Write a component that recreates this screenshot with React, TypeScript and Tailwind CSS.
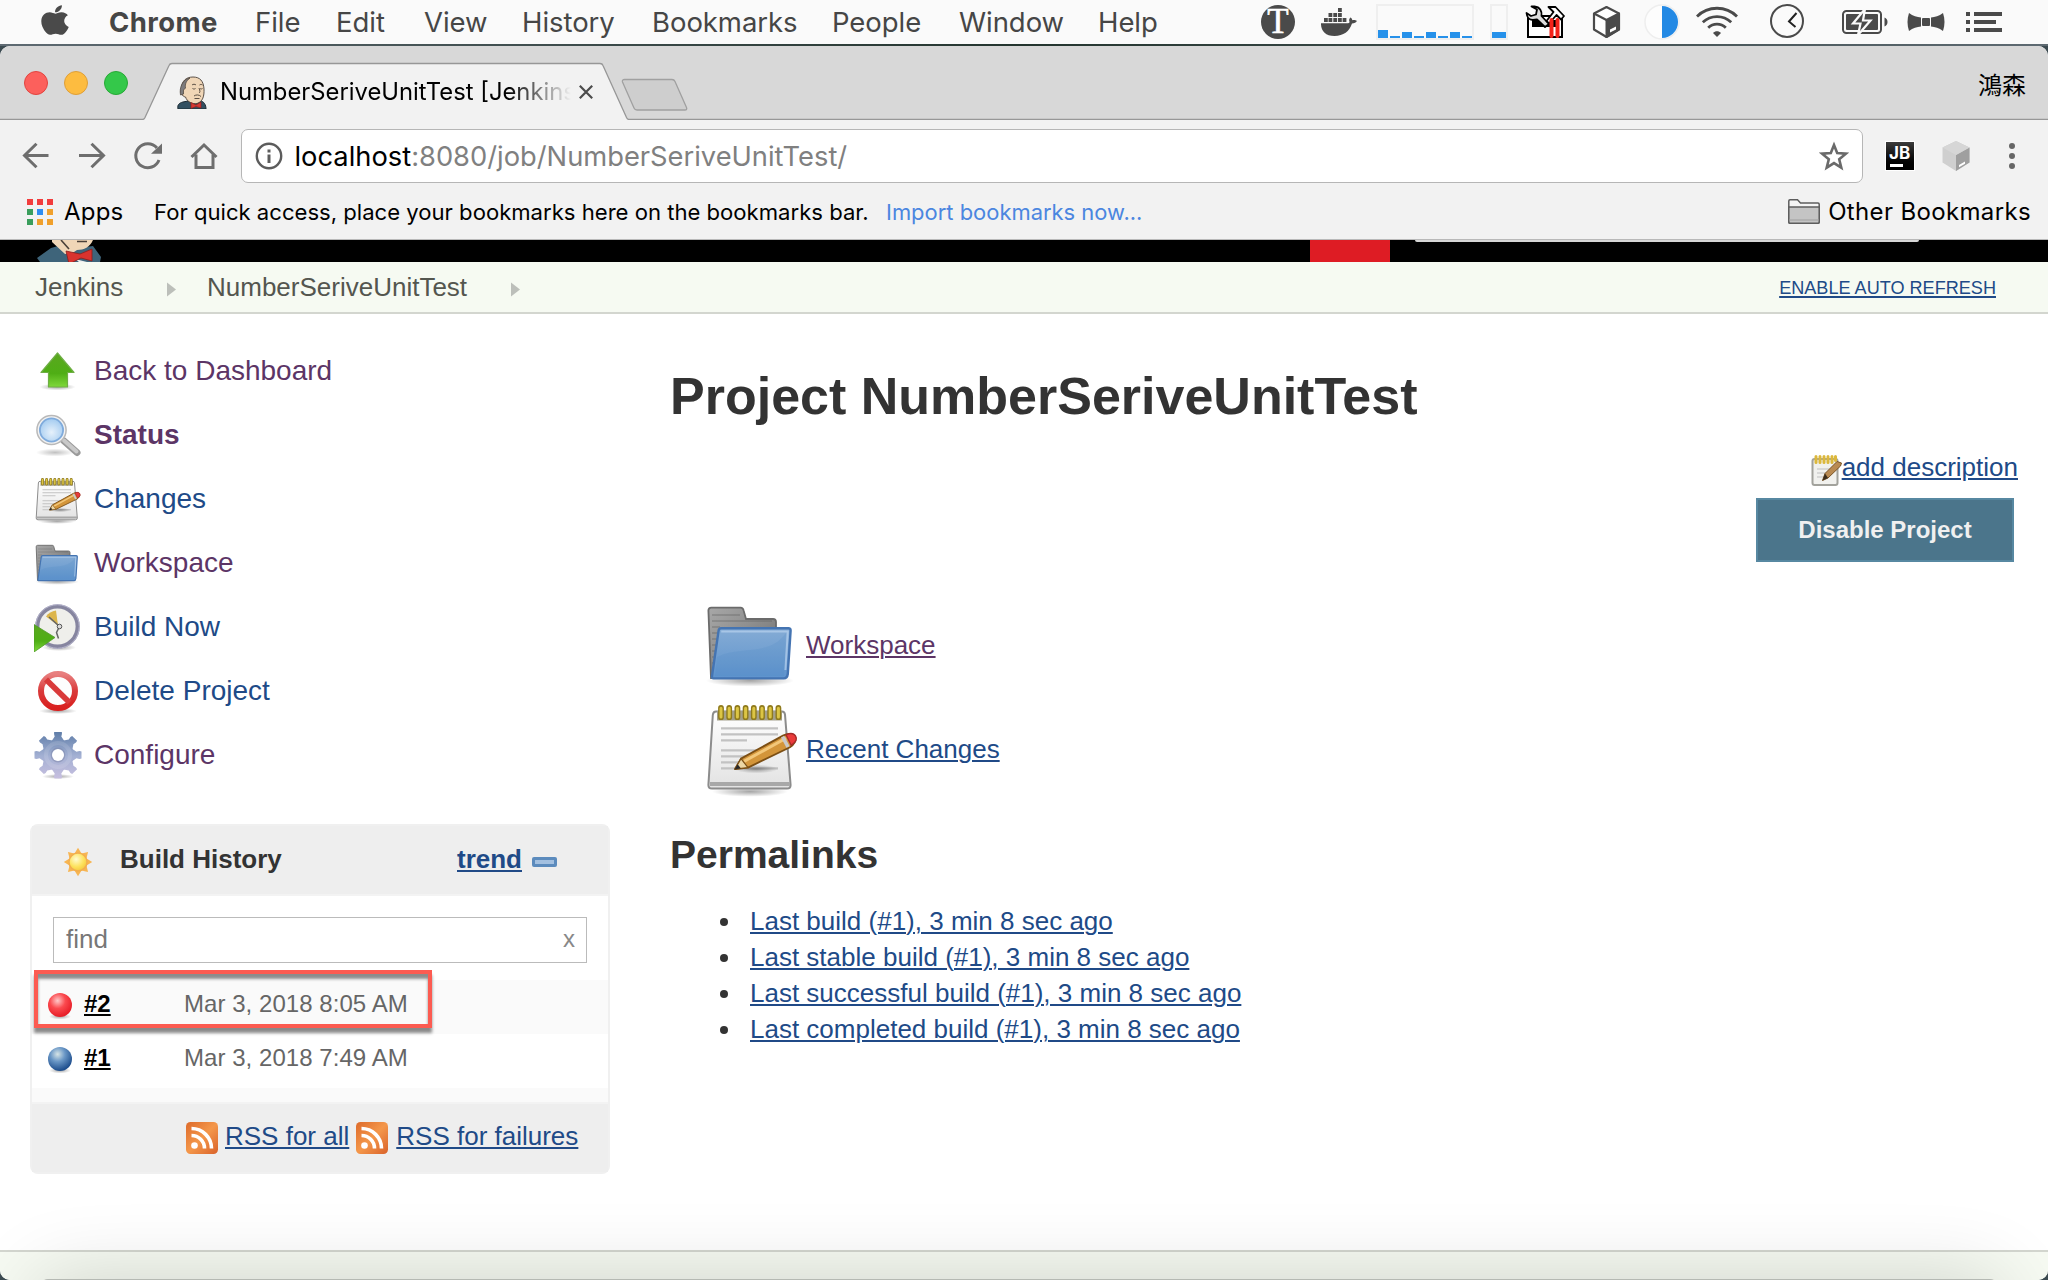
import React from "react";
import { FaApple } from "react-icons/fa";

const LINK = "underline decoration-2 underline-offset-[2px] whitespace-nowrap";

/* ---------- menu bar ---------- */

const MENUS: [string, string][] = [
  ["File", "w-[81px]"],
  ["Edit", "w-[88px]"],
  ["View", "w-[98px]"],
  ["History", "w-[130px]"],
  ["Bookmarks", "w-[180px]"],
  ["People", "w-[127px]"],
  ["Window", "w-[139px]"],
  ["Help", "w-[70px]"],
];

function DockerIcon() {
  const boxes = [
    [17, 8], [7.5, 13], [12.3, 13], [17, 13],
    [3, 18], [7.5, 18], [12.3, 18], [17, 18], [21.6, 18],
  ];
  return (
    <svg className="ml-[26px] h-[44px] w-[36px]" viewBox="0 0 36 44" fill="#4a4a4a">
      {boxes.map(([x, y]) => (
        <rect key={`${x}-${y}`} x={x} y={y} width="3.8" height="4" />
      ))}
      <path d="M0 23.3h26c1.600 0 2.500-.5 2.600-1.300-.9-1.600-.4-3.600 1-4.600 1 .8 1.600 1.700 1.700 2.800 1.700-.3 3.600 0 4.600.9-.8 1.600-2.600 2.500-4.900 2.500C28.500 31.500 22.500 36 13.500 36 4.500 36-.2 31 0 23.300z" />
    </svg>
  );
}

function ToolboxIcon() {
  return (
    <svg className="ml-[17px] h-[44px] w-[40px]" viewBox="0 0 40 44">
      <path d="M3 16h34v21H3z" fill="#fff" stroke="#000" strokeWidth="2" />
      <path d="M7 20h26v7H7z" fill="#000" />
      <path d="M6.500 6.500 12 9.500l-1 5-5 1.500-4.500-3c.5 4.500 3 7 6.500 7l4-.5 8 7.500 4-3-7.500-8c.8-4.500-1.500-9-7-9.500z" fill="#ddd" stroke="#000" strokeWidth="1.800" strokeLinejoin="round" />
      <path d="M23.500 7h7l8.500 9-3 3.500-4.500-4.500-7.500 8.500-2.500-2.500 7-9z" fill="#fff" stroke="#000" strokeWidth="1.800" strokeLinejoin="round" />
      <path d="M26.500 20v16M32.500 20v16" stroke="#f4231b" strokeWidth="4" strokeLinecap="round" />
    </svg>
  );
}

function MenuBar() {
  return (
    <div className="flex h-11 shrink-0 items-center bg-[#fafafa] font-[Inter] text-[27.5px] leading-[44px] text-[#464646]">
      <div className="flex w-[109px] shrink-0 items-center pl-[41px]">
        <FaApple className="h-[34px] w-[28px] -translate-y-[2px] text-[#4a4a4a]" preserveAspectRatio="none" />
      </div>
      <span className="w-[146px] font-bold tracking-[0.4px]">Chrome</span>
      {MENUS.map(([m, w]) => (
        <span key={m} className={`${w} whitespace-nowrap tracking-[-0.05px]`}>{m}</span>
      ))}
      <div className="ml-[93px] flex size-[34px] items-center justify-center rounded-full bg-[#4a4a4a]">
        <span className="font-['Liberation_Serif'] text-[35px] leading-[34px] text-white [-webkit-text-stroke:0.6px_white]">T</span>
      </div>
      <DockerIcon />
      <div className="ml-[19px] flex h-[36px] w-[98px] items-end gap-[2px] border-2 border-[#efefef] pb-0">
        {[8, 2, 6, 2, 6, 2, 6, 2].map((h, i) => (
          <span key={i} className="w-[10px] bg-[#2691ea]" style={{ height: h }} />
        ))}
      </div>
      <div className="ml-4 flex h-[36px] w-[18px] items-end border-2 border-[#efefef]">
        <span className="h-[6px] w-full bg-[#2691ea]" />
      </div>
      <ToolboxIcon />
      <svg className="ml-[27px] h-[44px] w-[30px]" viewBox="0 0 30 44">
        <path d="M14.500 7 27 13.500v16L14.500 37 2 29.500v-16z" fill="#fff" stroke="#4a4a4a" strokeWidth="2.200" strokeLinejoin="round" />
        <path d="M14.500 20 27 13.500v16L14.500 37z" fill="#4a4a4a" stroke="#4a4a4a" strokeWidth="2" strokeLinejoin="round" />
        <path d="M2 13.500 14.500 20" stroke="#4a4a4a" strokeWidth="2.200" />
        <path d="m18 29.500 6-3v3l-6 3z" fill="#fff" />
      </svg>
      <svg className="ml-[22px] h-[44px] w-[36px]" viewBox="0 0 36 44">
        <circle cx="18" cy="22" r="17" fill="#fdfdfd" stroke="#eeeeee" strokeWidth="1.500" />
        <path d="M18 6a16 16 0 0 1 0 32z" fill="#2389e4" />
      </svg>
      <svg className="ml-[16px] h-[44px] w-[42px]" viewBox="0 0 42 44" fill="none" stroke="#4a4a4a" strokeWidth="2.800">
        <path d="M1 16.500C12 5.500 30 5.500 41 16.500" />
        <path d="M6.800 22.300c8-7.600 20.400-7.600 28.400 0" />
        <path d="M12.200 27.800c5-4.800 12.600-4.800 17.600 0" />
        <path d="M17 33c2.200-2.200 5.800-2.200 8 0l-4 4z" fill="#4a4a4a" stroke="none" />
      </svg>
      <svg className="ml-[32px] h-[44px] w-[34px]" viewBox="0 0 34 44" fill="none">
        <circle cx="17" cy="21" r="16" stroke="#4a4a4a" strokeWidth="2" />
        <path d="m26.500 13-7.500 8.500 6.500 5.500" stroke="#222" strokeWidth="2" />
      </svg>
      <svg className="ml-[38px] h-[44px] w-[46px]" viewBox="0 0 46 44">
        <rect x="1" y="11" width="38" height="22" rx="3.500" fill="none" stroke="#4a4a4a" strokeWidth="2" />
        <rect x="4" y="14" width="32" height="16" rx="1" fill="#4a4a4a" />
        <path d="M42.500 17.500c4 1 4 8 0 9z" fill="#4a4a4a" />
        <path d="M23 9 11 23.500h7.500L16 35l12.500-14.500h-7.500z" fill="#4a4a4a" stroke="#fafafa" strokeWidth="2.200" />
      </svg>
      <svg className="ml-[19px] h-[44px] w-[38px]" viewBox="0 0 38 44" fill="#4a4a4a">
        <path d="M2 13c4 3 8 4 12 4.500v9C10 27 6 28 2 31c-2-6-2-12 0-18zM36 13c-4 3-8 4-12 4.500v9C28 27 32 28 36 31c2-6 2-12 0-18z" />
        <rect x="15" y="18" width="8" height="8" rx="1" />
      </svg>
      <svg className="ml-[21px] h-[44px] w-[36px]" viewBox="0 0 36 44" fill="#4a4a4a">
        <path d="M0 12h4v4H0zM8 12h28v4H8zM0 20h4v4H0zM8 20h22v4H8zM0 28h4v4H0zM8 28h28v4H8z" />
      </svg>
    </div>
  );
}

/* ---------- browser chrome ---------- */

function ButlerFace({ className }: { className: string }) {
  return (
    <svg className={className} viewBox="0 0 30 33">
      <path d="M1 33c-1-4 1-6 5-7l5-1h12c4 0 6 4 6 8z" fill="#335061" stroke="#1d2a33" />
      <path d="M4.500 13C4.500 5 9 1 16 1c7 0 10.500 4 11 12 .3 7-1 12.500-7 14.500-5 1-10-2-11.500-6.500C5 20.500 3 16 4.500 13z" fill="#f0d6b7" stroke="#4a4038" strokeWidth=".9" />
      <path d="M3.500 19C2 11 6 3 13 2 9 5 8 8 8.500 12L6.500 14v4z" fill="#7d7b7d" stroke="#4a4038" strokeWidth=".7" />
      <path d="M15 9c1-1 3-1 4 0M22.500 9c1-.7 2-.7 3 0M15.500 12.500c1 .7 2 .7 3 0M23 12.500c.8.600 1.700.600 2.500 0M22 12c1 3 1.500 4 0 5M17 20c2-1.500 5-1.500 7 .5M17.500 22.500h5" fill="none" stroke="#4a4038" strokeWidth=".9" />
      <path d="M14 26.500 19 29l5-3v6l-5-1.500-5 2z" fill="#d33833" stroke="#8e1d1a" strokeWidth=".6" />
    </svg>
  );
}

function TabStrip() {
  return (
    <div className="relative flex h-[74px] shrink-0 items-stretch bg-[#d8d8d8]">
      {/* Strip baseline and the outlines of the active tab and the new-tab button. */}
      <svg className="absolute inset-0 h-[74px] w-full" fill="none">
        <path d="M0 73.500h142.500c1.500 0 2-1 2.500-2L169 19.500c.6-1.500 1.500-2 3-2h428c1.500 0 2.500.5 3 2l23.500 52c.5 1 1 2 2.500 2H2048V74H0z" fill="#f2f2f2" />
        <path d="M0 73.500h142.500c1.500 0 2-1 2.500-2L169 19.500c.6-1.500 1.500-2 3-2h428c1.500 0 2.500.5 3 2l23.500 52c.5 1 1 2 2.500 2H2048" stroke="#979797" strokeWidth="1.300" />
        <path d="M624.500 33.500H672c1.500 0 2.500.8 3 2l11.500 26c.6 1.500 0 2.500-1.500 2.500h-48c-1.500 0-2.500-.8-3-2l-11.500-26c-.6-1.500.5-2.500 2-2.500z" fill="#cecece" stroke="#a0a0a0" strokeWidth="1.300" />
      </svg>
      <div className="relative flex flex-1 items-center">
        <div className="mt-[2px] flex w-[177px] items-center gap-4 pb-[2px] pl-6">
          <span className="size-6 rounded-full border border-[#e2443f] bg-[#fc605c]" />
          <span className="size-6 rounded-full border border-[#df9f38] bg-[#fdbc40]" />
          <span className="size-6 rounded-full border border-[#27a936] bg-[#34c84a]" />
        </div>
        <ButlerFace className="mt-[18px] h-[33px] w-[30px]" />
        <span className="mt-[17px] ml-[13px] w-[351px] overflow-hidden mask-r-from-82% mask-r-to-100% font-[Inter] text-[23.800px] leading-[32px] whitespace-nowrap text-black">
          NumberSeriveUnitTest [Jenkins]
        </span>
        <svg className="mt-[18px] ml-[8px] size-[14px]" viewBox="0 0 14 14" stroke="#4c4c4c" strokeWidth="2.200">
          <path d="M.8.800l12.400 12.400M13.200.800.800 13.200" />
        </svg>
        <span className="mt-[2px] mr-[22px] ml-auto font-['Noto_Sans_CJK_TC',sans-serif] text-[24px] leading-[32px] text-black">鴻森</span>
      </div>
    </div>
  );
}

function Toolbar() {
  return (
    <div className="flex h-[72px] shrink-0 items-center bg-[#f2f2f2]">
      <svg className="h-[72px] w-[241px]" viewBox="0 0 241 72" fill="none" stroke="#6e6e6e" strokeWidth="3">
        <path d="M48.500 35.500H25M36.500 23.700 24.500 35.500l12 11.800" />
        <path d="M79 35.500h23.500M91.500 23.700l12 11.800-12 11.800" />
        <path d="M159 40A12 12 0 1 1 157 28" />
        <path d="M162 23.500v10.300H151z" fill="#6e6e6e" stroke="none" />
        <path d="m191.500 37 12.500-12 12.500 12M196 34.500v13h17v-13" />
      </svg>
      <div className="flex h-[54px] w-[1622px] items-center rounded-[7px] border border-[#b6b6b6] bg-white pl-[13px]">
        <svg className="size-[28px]" viewBox="0 0 28 28" fill="none" stroke="#5c5c5c">
          <circle cx="14" cy="14" r="12.200" strokeWidth="2.400" />
          <path d="M14 12.500v8.500M14 7.500v3" strokeWidth="3" />
        </svg>
        <span className="mt-[2px] ml-[11.500px] font-[Inter] text-[27.300px] leading-[40px] whitespace-nowrap text-[#808080]">
          <span className="text-black">localhost</span>:8080/job/NumberSeriveUnitTest/
        </span>
        <svg className="mr-[13px] ml-auto size-[30px]" viewBox="0 0 30 30" fill="none" stroke="#6a6a6a" strokeWidth="2.600">
          <path d="m15 4 3.200 8.100 8.700.6-6.700 5.600 2.100 8.400L15 22.100l-7.300 4.600 2.100-8.400-6.700-5.600 8.700-.6z" />
        </svg>
      </div>
      <div className="ml-[22px] flex size-[30px] flex-col border border-white bg-linear-to-b from-[#3c3c3c] to-black">
        <span className="h-[22px] pl-[3px] font-[Inter] text-[17px] leading-[22px] font-bold text-white">JB</span>
        <span className="ml-1 h-[2.500px] w-[13px] bg-white" />
      </div>
      <svg className="ml-[27px] size-[30px]" viewBox="0 0 30 30">
        <path d="m14 0 13.500 6.500v15L14 30 .5 21.500v-15z" fill="#cfcfcf" />
        <path d="M14 14 27.500 6.500v15L14 30z" fill="#9f9f9f" />
        <path d="m14 0 13.500 6.500L14 14 .5 6.500z" fill="#d6d6d6" />
        <path d="m17 24 6-3.500v2.300l-6 3.400z" fill="#fff" />
      </svg>
      <div className="ml-[37px] flex flex-col gap-1">
        <span className="size-[6px] rounded-full bg-[#666]" />
        <span className="size-[6px] rounded-full bg-[#666]" />
        <span className="size-[6px] rounded-full bg-[#666]" />
      </div>
    </div>
  );
}

const APP_DOTS = [
  "bg-[#f23d3d]", "bg-[#f23d3d]", "bg-[#f23d3d]",
  "bg-[#3a9e5c]", "bg-[#2e8df2]", "bg-[#f0a02c]",
  "bg-[#3a9e5c]", "bg-[#f0a02c]", "bg-[#f0a02c]",
];

function BookmarksBar() {
  return (
    <div className="flex h-12 shrink-0 items-center border-b border-[#b9b9b9] bg-[#f2f2f2] pb-[10px] pl-[27px] font-[Inter] whitespace-nowrap text-black">
      <div className="mt-[2px] grid grid-cols-3 gap-1">
        {APP_DOTS.map((c, i) => (
          <span key={i} className={`size-[6px] ${c}`} />
        ))}
      </div>
      <span className="mt-[3px] ml-[11px] w-[90px] text-[24px] leading-[32px] tracking-[0.2px]">Apps</span>
      <span className="mt-[2px] w-[732px] text-[22.100px] leading-[32px]">
        For quick access, place your bookmarks here on the bookmarks bar.
      </span>
      <span className="mt-[2px] text-[21.950px] leading-[32px] text-[#4b86e0]">Import bookmarks now...</span>
      <svg className="mt-[2px] ml-auto h-[25px] w-[32px]" viewBox="0 0 32 25" stroke="#5d5d5d" strokeWidth="1.500">
        <path d="M.8 23V2Q.8.800 2 .8h7.500L12.500 4H30q1.200 0 1.200 1.200V23q0 1.200-1.200 1.200H2Q.8 24.200.8 23z" fill="#f4f4f4" />
        <path d="M.8 8h30.400v15q0 1.200-1.200 1.200H2Q.8 24.200.8 23z" fill="#c4c4c4" />
        <path d="M1.600 21h28.800" stroke="#ababab" />
      </svg>
      <span className="mt-[2px] mr-[17px] ml-2 text-[24px] leading-[32px] tracking-[0.350px]">Other Bookmarks</span>
    </div>
  );
}

/* ---------- page icons ---------- */

function Defs() {
  return (
    <svg className="absolute size-0">
      <defs>
        <linearGradient id="green" x1="0" y1="0" x2="0" y2="1"><stop offset="0" stopColor="#5aa71f" /><stop offset=".6" stopColor="#4fae15" /><stop offset="1" stopColor="#7fd83a" /></linearGradient>
        <linearGradient id="blue" x1="0" y1="0" x2="0" y2="1"><stop offset="0" stopColor="#85acd5" /><stop offset="1" stopColor="#5e93cd" /></linearGradient>
        <linearGradient id="grey" x1="0" y1="0" x2="1" y2="1"><stop offset="0" stopColor="#a8a8a8" /><stop offset="1" stopColor="#6c6c6c" /></linearGradient>
        <linearGradient id="paper" x1="0" y1="0" x2="0" y2="1"><stop offset="0" stopColor="#ffffff" /><stop offset="1" stopColor="#e2e2e2" /></linearGradient>
        <linearGradient id="redband" x1="0" y1="0" x2="0" y2="1"><stop offset="0" stopColor="#e87f7f" /><stop offset=".5" stopColor="#d93a3a" /><stop offset="1" stopColor="#d9201f" /></linearGradient>
        <linearGradient id="gear" x1="0" y1="0" x2="0" y2="1"><stop offset="0" stopColor="#5f7da8" /><stop offset=".5" stopColor="#a3b0d3" /><stop offset="1" stopColor="#c9c0e0" /></linearGradient>
        <linearGradient id="rss" x1="0" y1="0" x2="1" y2="1"><stop offset="0" stopColor="#dd6a2b" /><stop offset=".5" stopColor="#f4974a" /><stop offset="1" stopColor="#d9622a" /></linearGradient>
        <radialGradient id="redball" cx=".4" cy=".32" r=".65"><stop offset="0" stopColor="#ffc9c9" /><stop offset=".5" stopColor="#fb4a4f" /><stop offset="1" stopColor="#e8202a" /></radialGradient>
        <radialGradient id="blueball" cx=".4" cy=".3" r=".68"><stop offset="0" stopColor="#d6e4e6" /><stop offset=".45" stopColor="#6a97c6" /><stop offset="1" stopColor="#1f4f8e" /></radialGradient>
        <radialGradient id="sun" cx=".4" cy=".35" r=".7"><stop offset="0" stopColor="#fffbd0" /><stop offset=".6" stopColor="#fde25c" /><stop offset="1" stopColor="#f3c53c" /></radialGradient>
        <radialGradient id="lens" cx=".5" cy=".6" r=".6"><stop offset="0" stopColor="#e6f1fb" /><stop offset="1" stopColor="#a3cbf0" /></radialGradient>
        <radialGradient id="shade"><stop offset="0" stopColor="#000" stopOpacity=".35" /><stop offset="1" stopColor="#000" stopOpacity="0" /></radialGradient>
      </defs>
    </svg>
  );
}

function UpIcon() {
  return (
    <svg className="size-12" viewBox="0 0 48 48">
      <ellipse cx="23.500" cy="39" rx="18" ry="3.500" fill="url(#shade)" />
      <path d="M23.500 5 40 24.500H33.500V39H14.500V24.500H7z" fill="url(#green)" stroke="#6fae45" strokeWidth="1.200" strokeLinejoin="round" />
    </svg>
  );
}

function SearchIcon() {
  return (
    <svg className="size-12" viewBox="0 0 48 48">
      <ellipse cx="21" cy="40.500" rx="19" ry="4" fill="url(#shade)" fillOpacity=".7" />
      <path d="m30 29 13 11.500" stroke="#9a9a9a" strokeWidth="7" strokeLinecap="round" />
      <path d="m30 28.500 12.500 11" stroke="#c9c9c9" strokeWidth="4" strokeLinecap="round" />
      <circle cx="17.500" cy="18" r="14.600" fill="#f2f2f2" stroke="#b9b9b9" strokeWidth="1.500" />
      <circle cx="17.500" cy="18" r="11.600" fill="url(#lens)" stroke="#7fabdc" strokeWidth="1.800" />
    </svg>
  );
}

function NotepadIcon({ className }: { className: string }) {
  return (
    <svg className={className} viewBox="0 0 48 48">
      <ellipse cx="23" cy="45.300" rx="19" ry="2.600" fill="url(#shade)" />
      <path d="M6 5.300h33q1.300 0 1.500 1.500L43.300 42q0 1.800-1.800 1.800H4q-1.800 0-1.800-1.800L4.400 7q.2-1.700 1.600-1.700z" fill="url(#paper)" stroke="#8c8c8c" strokeWidth="1" />
      <path d="M3 40.500h40v2H3z" fill="#a8a8a8" />
      <path d="M6.500 5h32.500v4.800H6.500z" fill="#a39f8c" />
      <path d="M8.500 3.500v4.600M12.600 3.500v4.600M16.700 3.500v4.600M20.800 3.500v4.600M24.900 3.500v4.600M29 3.500v4.600M33.100 3.500v4.600M37.200 3.500v4.600" stroke="#8f7a1c" strokeWidth="2.900" strokeLinecap="round" />
      <path d="M8.500 3.600v4.400M12.600 3.600v4.400M16.700 3.600v4.400M20.800 3.600v4.400M24.900 3.600v4.400M29 3.600v4.400M33.100 3.600v4.400M37.200 3.600v4.400" stroke="#dcc545" strokeWidth="1.500" strokeLinecap="round" />
      <path d="M8.500 13.700h28.500M8.500 16.700h28.500M8.500 19.700h13M8.500 24.700h18M8.500 27.700h14M8.500 30.700h11M8.500 33.700h28.500" stroke="#c2c2c2" strokeWidth="1.100" />
      <ellipse cx="26" cy="34" rx="11" ry="2.200" fill="url(#shade)" />
      <path d="M15.500 34 18.500 28.800 39.500 17.300c2.200-1.200 5-1.200 6 .4 1.100 2-.6 4.200-2.500 5.400L22 33.300z" fill="#d3953a" stroke="#7c4f14" strokeWidth=".9" strokeLinejoin="round" />
      <path d="M20 30.200 41 18.600" stroke="#f2c77a" strokeWidth="1.500" />
      <path d="M15.500 34 18.500 28.800l3.500 4.500z" fill="#ecd6a4" stroke="#7c4f14" strokeWidth=".6" />
      <path d="m15.300 34.200 1.500-2.600 1.600 2z" fill="#2a2a2a" />
      <path d="m41 16.900 2.600 5.200c1.900-1.200 3.200-2.700 2.200-4.500-.9-1.500-3-1.500-4.800-.7z" fill="#ea3b3b" stroke="#a62a2a" strokeWidth=".7" />
      <path d="m39.300 17.800 2.700 5.200" stroke="#c9c9c9" strokeWidth="1.800" />
    </svg>
  );
}

function FolderIcon({ className }: { className: string }) {
  return (
    <svg className={className} viewBox="0 0 48 48">
      <ellipse cx="23" cy="41.800" rx="22" ry="3" fill="url(#shade)" />
      <path d="M2.200 6.800Q2.200 5.300 3.700 5.300h14.600q1.200 0 1.500 1.400L21 11h13.500q1.500 0 1.500 1.500V40.500H3.500z" fill="url(#grey)" stroke="#6b6b6b" strokeWidth=".9" />
      <path d="M4 9h14M4 12h30M4 15h4M4 18h3M4 21h3M4 24h3M4 27h2.500M4 30h2M4 33h2" stroke="#5c5c5c" strokeOpacity=".3" strokeWidth="1" />
      <path d="M7.300 16.800q.1-1.200 1.300-1.200h33.600q1.200 0 1.100 1.300L41.900 38.500q-.3 2.200-2 2.200H4.800q-.9 0-.8-1.200z" fill="url(#blue)" stroke="#4474b2" strokeWidth="1.200" />
      <path d="M8.600 17.200h33.300L40.700 36.500" fill="none" stroke="#b8d2ee" strokeOpacity=".7" strokeWidth="1" />
      <path d="M6.500 30c12-6 26 0 34.500-12l-1 21.500H5.500z" fill="#3f7cc0" fillOpacity=".14" />
    </svg>
  );
}

function BuildNowIcon() {
  return (
    <svg className="size-12" viewBox="0 0 48 48">
      <ellipse cx="25" cy="43.500" rx="17" ry="3.500" fill="url(#shade)" />
      <circle cx="23.500" cy="22.500" r="20.200" fill="#efefeb" stroke="#86859f" strokeWidth="4.200" />
      <circle cx="23.500" cy="22.500" r="21.800" fill="none" stroke="#b9b8d0" strokeWidth="1" />
      <path d="M24 21.500 12 12.500c2-3 6-5.500 10-6z" fill="#dcb54c" />
      <path d="M15 13 25.500 22.500l-3 6 2 6" fill="none" stroke="#666" strokeWidth="1.500" />
      <circle cx="25.500" cy="22.500" r="2.300" fill="#ddd" stroke="#555" strokeWidth="1" />
      <path d="M0 20.500 21 33.500 0 48z" fill="url(#green)" stroke="#4f9a2a" strokeWidth=".8" />
    </svg>
  );
}

function DeleteIcon() {
  return (
    <svg className="size-12" viewBox="0 0 48 48">
      <ellipse cx="24" cy="43" rx="19" ry="3" fill="url(#shade)" />
      <circle cx="24" cy="23" r="17" fill="#fdfdfd" stroke="url(#redband)" strokeWidth="6" />
      <path d="m12 11.500 23.500 23" stroke="#d93a3a" strokeWidth="5.800" />
    </svg>
  );
}

const TEETH = [0, 45, 90, 135, 180, 225, 270, 315];

function GearIcon() {
  return (
    <svg className="size-12" viewBox="0 0 48 48">
      <ellipse cx="24" cy="44.500" rx="16" ry="2.500" fill="url(#shade)" />
      <mask id="hub"><rect width="48" height="48" fill="#fff" /><circle cx="24" cy="23" r="6" fill="#000" /></mask>
      <mask id="cog">
        <circle cx="24" cy="23" r="15.500" fill="#fff" />
        {TEETH.map((a) => (
          <path key={a} transform={`rotate(${a} 24 23)`} d="M17 10 20.700 4.500Q19.500 1 20.500-.5h7q1 1.500-.2 5L31 10z" fill="#fff" />
        ))}
      </mask>
      <g mask="url(#hub)"><rect width="48" height="48" fill="url(#gear)" mask="url(#cog)" /></g>
      <circle cx="24" cy="23" r="6.800" fill="none" stroke="#7e86a8" strokeOpacity=".5" strokeWidth="1.200" />
      <circle cx="24" cy="23" r="12" fill="none" stroke="#fff" strokeOpacity=".12" strokeWidth="4" />
    </svg>
  );
}

function SunIcon() {
  return (
    <svg className="mt-[3px] size-[30px]" viewBox="0 0 30 30">
      {TEETH.map((a) => (
        <path key={a} transform={`rotate(${a} 15 15)`} d="M11.500 6.500 15 .8l3.500 5.700z" fill="#f7b552" />
      ))}
      <circle cx="15" cy="15" r="9" fill="url(#sun)" stroke="#f2ad4e" strokeWidth="1.400" />
    </svg>
  );
}

function RssIcon() {
  return (
    <svg className="mt-[4px] size-8 shrink-0" viewBox="0 0 32 32">
      <rect width="32" height="32" rx="4.500" fill="url(#rss)" />
      <circle cx="8.500" cy="23.500" r="3.300" fill="#fff" />
      <path d="M5.500 13.500A13 13 0 0 1 18.500 26.500M5.500 6.500A20 20 0 0 1 25.500 26.500" fill="none" stroke="#fff" strokeWidth="3.600" />
    </svg>
  );
}

function Ball({ fill }: { fill: string }) {
  return (
    <svg className="size-7 translate-y-[2px]" viewBox="0 0 28 28">
      <ellipse cx="14" cy="24.500" rx="11" ry="3" fill="url(#shade)" />
      <circle cx="14" cy="13" r="12" fill={fill} />
    </svg>
  );
}

/* ---------- page ---------- */

const VISITED = "text-[#5c3566]";
const UNVISITED = "text-[#204a87]";

const TASKS: [React.ReactNode, string, string][] = [
  [<UpIcon />, "Back to Dashboard", VISITED],
  [<SearchIcon />, "Status", `${VISITED} font-bold`],
  [<NotepadIcon className="size-12" />, "Changes", UNVISITED],
  [<FolderIcon className="size-12" />, "Workspace", VISITED],
  [<BuildNowIcon />, "Build Now", UNVISITED],
  [<DeleteIcon />, "Delete Project", UNVISITED],
  [<GearIcon />, "Configure", VISITED],
];

function BuildRow({ fill, id, date, shade }: { fill: string; id: string; date: string; shade: string }) {
  return (
    <div className={`flex h-[54px] items-center pb-[6px] pl-[14px] text-[24px] leading-[28px] ${shade}`}>
      <Ball fill={fill} />
      <a className={`ml-[10px] w-[100px] font-bold text-black ${LINK}`}>{id}</a>
      <span className="tracking-[0.05px] text-[#666]">{date}</span>
    </div>
  );
}

function BuildHistory() {
  return (
    <section className="relative mt-9 ml-[30px] flex h-[350px] w-[580px] flex-col rounded-[8px] border-2 border-[#f0f0f0] text-[26px] leading-[32px]">
      <header className="flex h-[70px] shrink-0 items-center border-b-2 border-[#f3f3f3] bg-[#eee] pl-[31px]">
        <SunIcon />
        <h2 className="-mt-[2px] ml-[27px] w-[337px] font-bold text-[#333]">Build History</h2>
        <a className={`-mt-[2px] font-bold text-[#204a87] ${LINK}`}>trend</a>
        <span className="mt-[4px] ml-[10px] h-[10px] w-[25px] rounded-[2px] border-[3px] border-[#5c8bbd] bg-[#a3c0e0]" />
      </header>
      <div className="mx-[21px] mt-[21px] mb-[17px] flex h-[46px] shrink-0 items-center justify-between border border-[#bbb] pr-[11px] pb-[2px] pl-[12px] text-[#777]">
        <span>find</span>
        <span className="text-[24px] text-[#888]">x</span>
      </div>
      <BuildRow fill="url(#redball)" id="#2" date="Mar 3, 2018 8:05 AM" shade="bg-[#fafafa]" />
      <BuildRow fill="url(#blueball)" id="#1" date="Mar 3, 2018 7:49 AM" shade="bg-white" />
      <div className="h-[14px] shrink-0 bg-[#fafafa]" />
      <footer className="flex h-[70px] items-center border-t-2 border-[#f3f3f3] bg-[#eee] pb-[4px] text-[#204a87]">
        <span className="w-[154px] shrink-0" />
        <RssIcon />
        <a className={`mr-[7px] ml-[7px] ${LINK}`}>RSS for all</a>
        <RssIcon />
        <a className={`ml-2 ${LINK}`}>RSS for failures</a>
      </footer>
      {/* Callout frame drawn over the failed build. */}
      <div className="absolute top-[144px] left-[2px] h-[58px] w-[398px] border-4 border-[#fc5b51] shadow-[0_5px_3px_rgba(0,0,0,0.45),inset_0_5px_3px_rgba(0,0,0,0.45)]" />
    </section>
  );
}

const PERMALINKS = [
  "Last build (#1), 3 min 8 sec ago",
  "Last stable build (#1), 3 min 8 sec ago",
  "Last successful build (#1), 3 min 8 sec ago",
  "Last completed build (#1), 3 min 8 sec ago",
];

function JobMain() {
  return (
    <main className="flex flex-1 flex-col pt-[52px] pl-[30px] text-[26px] leading-[32px] text-[#333]">
      <h1 className="h-[85px] text-[52px] leading-[60px] font-bold">Project NumberSeriveUnitTest</h1>
      <div className="flex h-[32px] items-center justify-end pr-[30px]">
        <svg className="mt-[7px] size-[31px]" viewBox="0 0 31 31">
          <rect x="1.500" y="4" width="25" height="26" rx="2" fill="#f1f1ee" stroke="#a2a29c" strokeWidth="2" />
          <path d="M6 14h16M6 18h12M6 22h9" stroke="#cfcfcf" strokeWidth="1.500" />
          <path d="M5 1.500v6M9 1.500v6M13 1.500v6M17 1.500v6M21 1.500v6M24.500 1.500v4" stroke="#dcb83c" strokeWidth="3" strokeLinecap="round" />
          <path d="m11.500 25.500 2.500-7L26 6.500l4.500 1.500-1 3L17 23z" fill="#b98a52" stroke="#7a5426" strokeWidth="1" />
          <path d="m11.500 25.500 2.500-7 3 4.500z" fill="#3b2d1c" />
        </svg>
        <a className={`text-[#204a87] ${LINK}`}>add description</a>
      </div>
      <button className="mt-[15px] mr-[34px] flex h-[64px] w-[258px] items-center justify-center self-end border-2 border-[#5788a1] bg-[#4b758b] pb-[1px] text-[24px] font-bold text-[#f0f0f0]">
        Disable Project
      </button>
      <div className="mt-[31px] flex h-[104px] items-center pl-[34px]">
        <FolderIcon className="size-24" />
        <a className={`ml-[6px] ${VISITED} ${LINK}`}>Workspace</a>
      </div>
      <div className="flex h-[104px] items-center pl-[34px]">
        <NotepadIcon className="size-24" />
        <a className={`ml-[6px] ${UNVISITED} ${LINK}`}>Recent Changes</a>
      </div>
      <h2 className="mt-[33px] mb-[28px] text-[39px] leading-[41px] font-bold">Permalinks</h2>
      <ul>
        {PERMALINKS.map((p) => (
          <li key={p} className="flex h-9 items-center">
            <span className="mt-[2px] mr-[22px] ml-[50px] size-2 rounded-full bg-[#333]" />
            <a className={`${UNVISITED} ${LINK}`}>{p}</a>
          </li>
        ))}
      </ul>
    </main>
  );
}

function Chevron({ className }: { className: string }) {
  return (
    <svg className={className} viewBox="0 0 9 14"><path d="M0 0l9 7-9 7z" fill="#bcbfba" /></svg>
  );
}

export default function App() {
  return (
    <div className="flex h-[1280px] w-[2048px] flex-col overflow-hidden bg-[#3b4a50] font-['Liberation_Sans',Arial,sans-serif]">
      <Defs />
      <MenuBar />
      <div className="h-[2px] shrink-0 bg-linear-to-r from-[#5e6a72] via-[#24352f] to-[#5e6a72]" />
      <div className="relative flex h-[1234px] flex-col overflow-hidden rounded-[10px] bg-white">
        <TabStrip />
        <Toolbar />
        <BookmarksBar />
        <div className="flex h-[22px] shrink-0 items-start overflow-hidden bg-black pl-[37px]">
          <svg className="h-[22px] w-[65px]" viewBox="0 0 65 22">
            <path d="M0 18 14 8l14-4 20 3 8-1 8 11-1 5H3z" fill="#3e647a" />
            <path d="M15 0h41c-3 7-9 10-16 10-4 3-8 4-12 4L15 2z" fill="#f0d6b7" />
            <path d="m24 0 8 9M40 1.500h10" stroke="#4a4038" strokeWidth="1.600" />
            <path d="m38 19 12 3h-8z" fill="#eee" />
            <path d="m29 11 14 3 12-5v12l-11-3-12 6z" fill="#d8332e" stroke="#8e1d1a" strokeWidth=".8" />
          </svg>
          <div className="ml-[1208px] h-[22px] w-20 bg-[#de1c24]" />
          <div className="ml-[25px] h-[2px] w-[504px] rounded-b-[2px] bg-[#d6d6d6]" />
        </div>
        <nav className="flex h-[52px] shrink-0 items-center border-b-2 border-[#d3d6cf] bg-[#f6faf2] pr-[52px] pl-[35px] text-[26px] leading-[32px] text-[#54564f]">
          <span className="w-[132px]">Jenkins</span>
          <Chevron className="mt-[4px] h-[15px] w-[9px]" />
          <span className="ml-[31px] w-[304px]">NumberSeriveUnitTest</span>
          <Chevron className="mt-[4px] h-[15px] w-[9px]" />
          <a className={`mt-[2px] ml-auto text-[18.100px] leading-[24px] text-[#204a87] ${LINK}`}>ENABLE AUTO REFRESH</a>
        </nav>
        <div className="flex h-[936px] shrink-0">
          <aside className="w-[640px] pt-[26px]">
            {TASKS.map(([icon, label, color]) => (
              <div key={label} className="flex h-16 items-center pl-[34px]">
                {icon}
                <span className={`mb-[2px] ml-[12px] text-[28px] leading-[32px] ${color}`}>{label}</span>
              </div>
            ))}
            <BuildHistory />
          </aside>
          <JobMain />
        </div>
        <div className="h-[30px] shrink-0 border-t-2 border-[#d3d6cf] bg-[#f6faf2]" />
        {/* Soft shadow rising from the bottom edge. */}
        <div className="absolute top-[1233px] right-[50px] left-[40px] h-[200px] rounded-[8px] bg-[#b5b9b3] shadow-[0_0_80px_rgba(0,0,0,0.16)]" />
      </div>
    </div>
  );
}
